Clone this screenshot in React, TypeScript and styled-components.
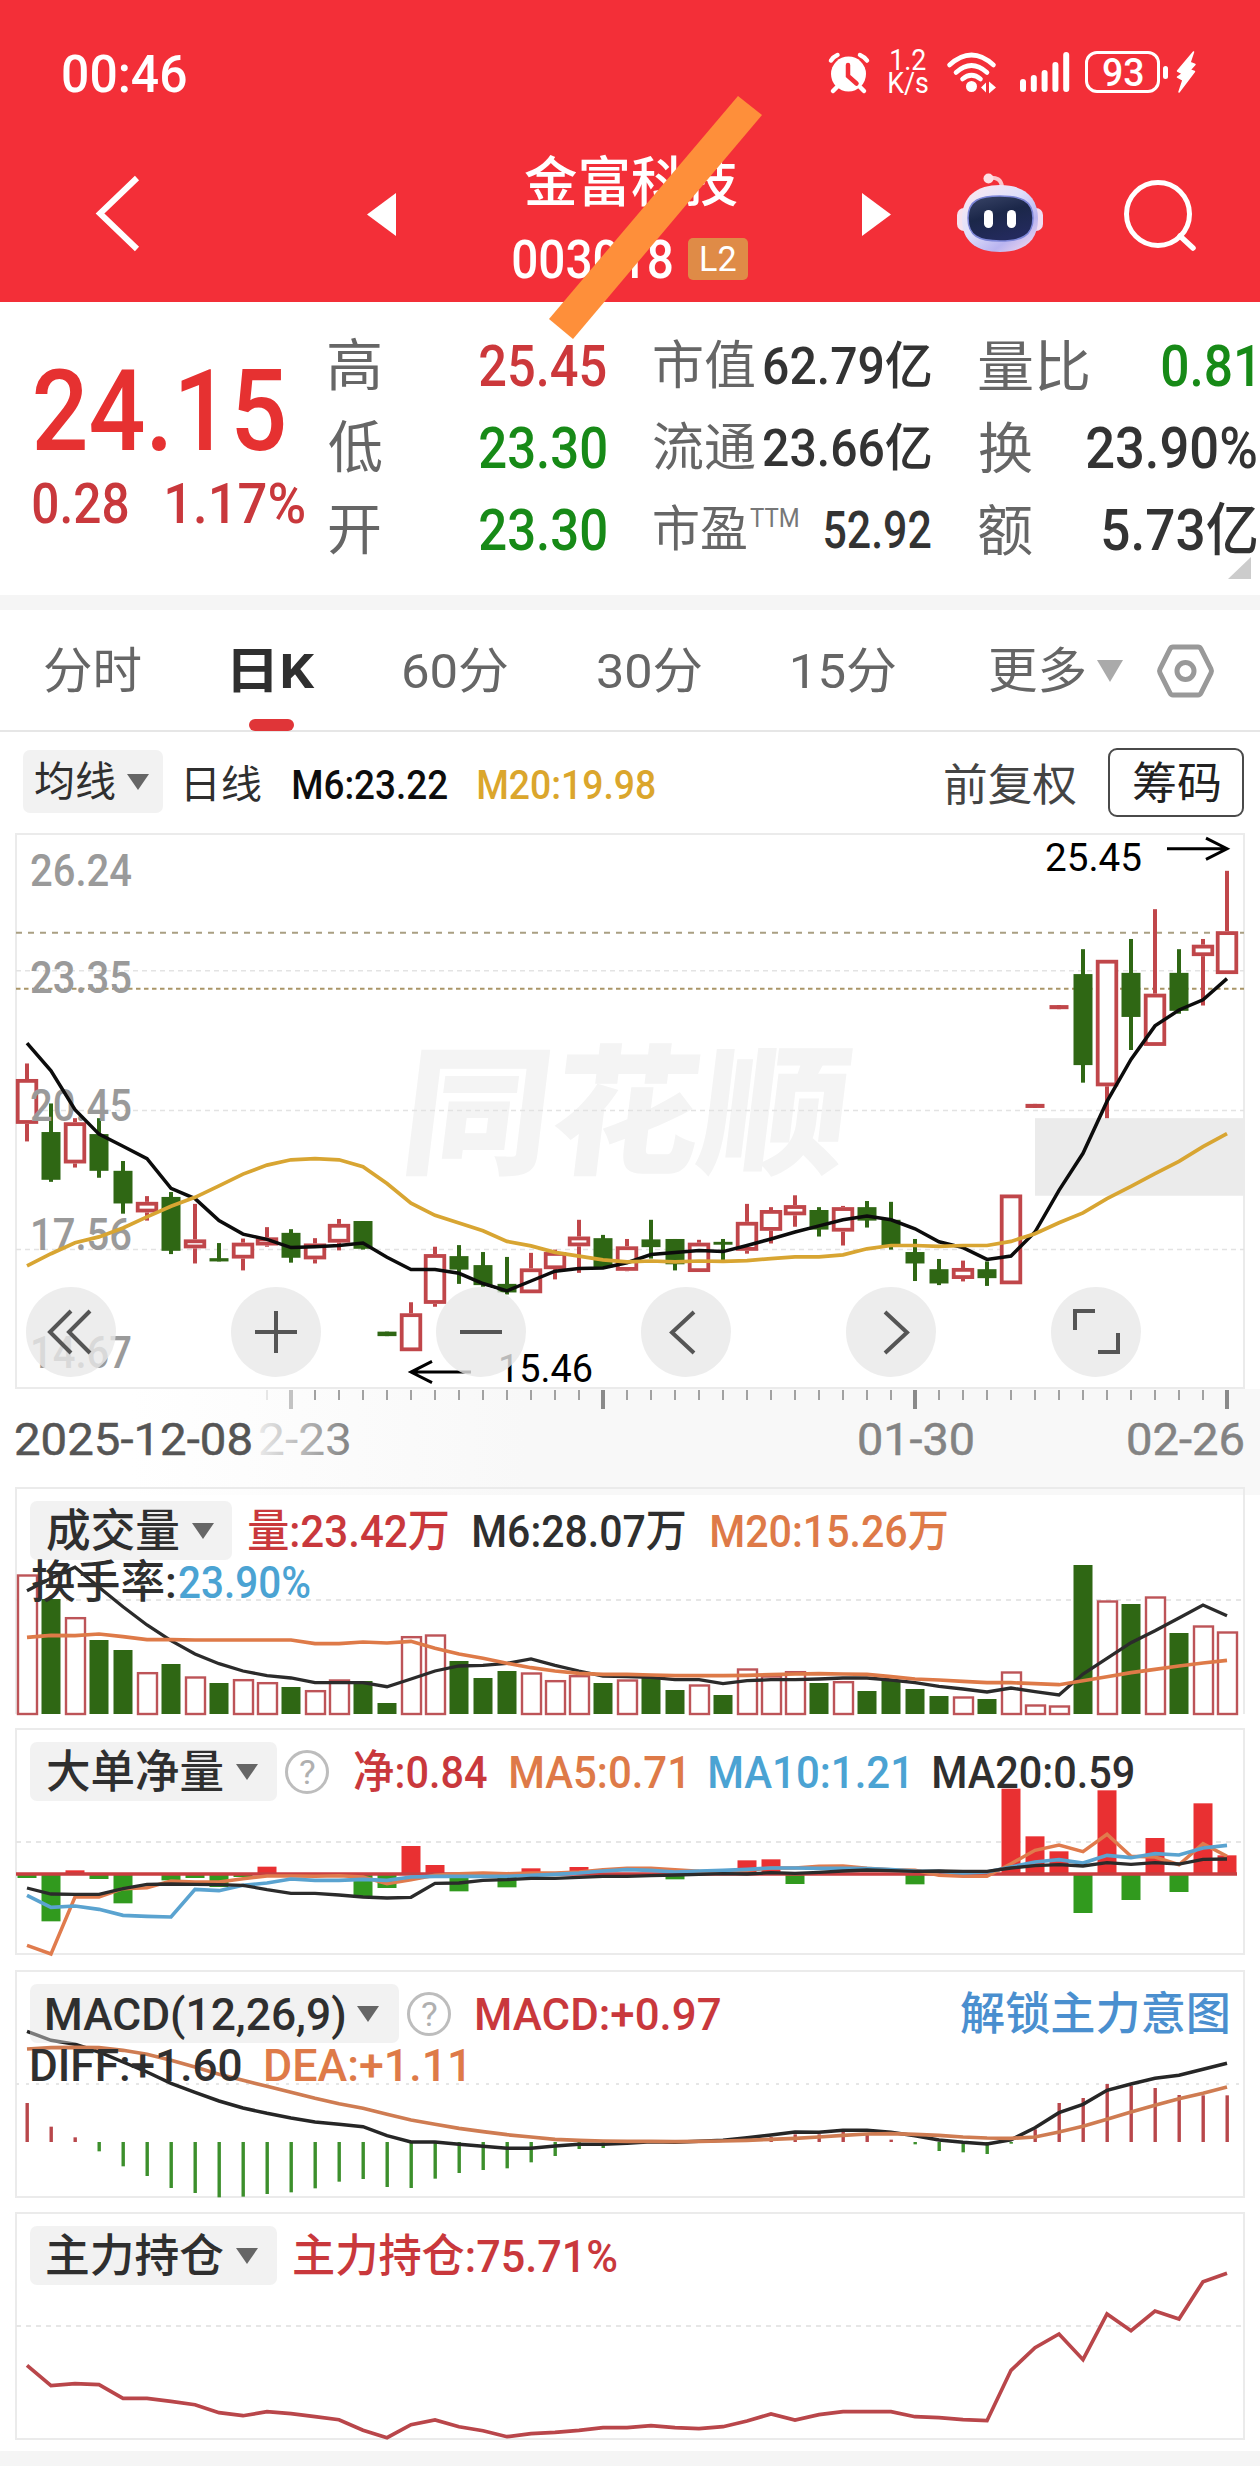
import React, { useLayoutEffect, useRef, useState } from 'react';
import styled, { createGlobalStyle } from 'styled-components';

const FONT = `Roboto, "Noto Sans CJK SC", sans-serif`;

const C = {
  header: '#f32f38',
  ink: '#2f2f2f',
  grey: '#666666',
  red: '#c9383c',
  up: '#c0464a',
  down: '#2f6714',
  green: '#178a17',
  orange: '#de7a48',
  blue: '#4ba3d3',
  gold: '#dba62c',
};

const GlobalStyle = createGlobalStyle`
  * { box-sizing: border-box; }
  html, body { margin: 0; padding: 0; background: #fff; }
  body { font-family: ${FONT}; color: ${C.ink}; width: 1260px; overflow-x: hidden; }
`;

/* ---------- condensed text: squeezes a run of glyphs to a given width ---------- */

const FitBox = styled.span<{ $w: number; $size: number; $weight: number; $color: string }>`
  display: inline-block;
  flex: none;
  width: ${p => p.$w}px;
  padding-top: 0.07em;
  font-size: ${p => p.$size}px;
  font-weight: ${p => p.$weight};
  color: ${p => p.$color};
  line-height: 1.2;
  white-space: nowrap;
`;
const FitInner = styled.span`
  display: inline-block;
  transform-origin: 0 50%;
`;

type FitProps = { children: string; w: number; size: number; weight?: number; color?: string };

function Fit({ children, w, size, weight = 400, color = C.ink }: FitProps) {
  const ref = useRef<HTMLSpanElement>(null);
  const [transform, setTransform] = useState('none');
  useLayoutEffect(() => {
    const ctx = document.createElement('canvas').getContext('2d');
    if (!ctx || !ref.current) return;
    ctx.font = `${weight} ${size}px ${FONT}`;
    const m = ctx.measureText(children);
    const left = -m.actualBoundingBoxLeft;
    const k = w / (m.actualBoundingBoxRight - left);
    setTransform(`scaleX(${k.toFixed(4)}) translateX(${(-left).toFixed(2)}px)`);
  }, [children, w, size, weight]);
  return (
    <FitBox $w={w} $size={size} $weight={weight} $color={color}>
      <FitInner ref={ref} style={{ transform }}>{children}</FitInner>
    </FitBox>
  );
}

/* ---------- header ---------- */

const Page = styled.main`
  position: relative;
  width: 1260px;
  height: 2470px;
  background: #fff;
  overflow: hidden;
`;
const Header = styled.header`
  height: 302px;
  background: ${C.header};
`;
const StatusBar = styled.div`
  height: 146px;
  padding: 0 64px 0 63px;
  display: flex;
  align-items: center;
  justify-content: space-between;
`;
const StatusIcons = styled.div`
  display: flex;
  align-items: center;
  margin-top: -2px;
`;
const NetSpeed = styled.div`
  display: flex;
  flex-direction: column;
  align-items: center;
  margin: 0 19px;
  && span { line-height: 23px; padding-top: 0; display: block; }
`;
const Glyph = styled.svg<{ $ml?: number }>`
  display: block;
  flex: none;
  overflow: visible;
  margin-left: ${p => p.$ml ?? 0}px;
`;
const Battery = styled.div`
  width: 75px;
  height: 42px;
  margin-left: 16px;
  border: 3px solid #fff;
  border-radius: 12px;
  display: flex;
  align-items: center;
  justify-content: center;
`;
const BatteryNub = styled.i`
  width: 5px;
  height: 13px;
  margin-left: 3px;
  border-radius: 3px;
  background: #fff;
`;
const Nav = styled.nav`
  height: 134px;
  padding-left: 96px;
  display: flex;
  align-items: center;
`;
const Title = styled.div`
  width: 235px;
  margin: 16px 0 0 117px;
  display: flex;
  flex-direction: column;
  align-items: center;
`;
const TitleLine = styled.div`
  width: 100%;
  height: 76px;
  display: flex;
  align-items: center;
  justify-content: center;
  gap: 16px;
`;
const Level = styled.span`
  width: 60px;
  height: 42px;
  border-radius: 5px;
  background: #df8b47;
  display: flex;
  align-items: center;
  justify-content: center;
`;
const Strike = styled.svg`
  position: absolute;
  left: 0;
  top: 0;
  pointer-events: none;
`;

function AlarmIcon() {
  return (
    <Glyph width="42" height="41" viewBox="0 0 42 41">
      <circle cx="20.5" cy="22" r="17.5" fill="#fff" />
      <g stroke="#fff" strokeWidth="4.5" strokeLinecap="round" fill="none">
        <path d="M3 8.500Q5 5 9.500 3M32 3Q36.500 5 39 8.500M9 35l-4 4M32 35l4 4" />
      </g>
      <path d="M20 13v11l8.500 7.500" stroke={C.header} strokeWidth="4.500" strokeLinecap="round" fill="none" />
    </Glyph>
  );
}
function WifiIcon() {
  return (
    <Glyph width="49" height="41" viewBox="0 0 49 41">
      <g stroke="#fff" strokeWidth="4.600" strokeLinecap="round" fill="none">
        <path d="M2.500 13Q24.500 -7 46.500 13" />
        <path d="M9 20.500Q24.500 6.500 40 20.500" />
        <path d="M15.500 27Q24.500 19.500 33.500 27" />
      </g>
      <circle cx="24.500" cy="34.500" r="5.500" fill="#fff" />
      <path d="M34 35.500l5-5v10zM49 35.500l-7-6v12z" fill="#fff" />
    </Glyph>
  );
}
function SignalIcon() {
  const tops = [27, 23, 18, 10, 0];
  return (
    <Glyph $ml={24} width="49" height="40" viewBox="0 0 49 40">
      {tops.map((t, i) => <rect key={t} x={i * 10.8} y={t} width="6" height={40 - t} rx="3" fill="#fff" />)}
    </Glyph>
  );
}
function RobotIcon() {
  return (
    <Glyph $ml={66} width="86" height="80" viewBox="0 0 86 80">
      <defs>
        <linearGradient id="shell" x1="0" y1="0" x2="0.9" y2="1">
          <stop offset="0" stopColor="#ffe9ee" />
          <stop offset="0.45" stopColor="#dfe0fb" />
          <stop offset="0.75" stopColor="#b9b4f0" />
          <stop offset="1" stopColor="#f3d8ee" />
        </linearGradient>
        <linearGradient id="visor" x1="0" y1="0" x2="0.4" y2="1">
          <stop offset="0" stopColor="#3a4568" />
          <stop offset="0.5" stopColor="#1b2749" />
          <stop offset="1" stopColor="#232a5c" />
        </linearGradient>
      </defs>
      <path d="M31 5q13-2 14 9" stroke="#fbc7cd" strokeWidth="4" fill="none" />
      <circle cx="31.500" cy="5.500" r="5" fill="#fddfe3" />
      <rect x="0" y="35" width="16" height="23" rx="7" fill="#f6e2ee" />
      <rect x="70" y="35" width="16" height="23" rx="7" fill="#f0dcf2" />
      <path d="M43 12C66 12 81 23 81 46C81 68 67 79 43 79C19 79 5 68 5 46C5 23 20 12 43 12z" fill="url(#shell)" />
      <path d="M43 23C63 23 76 27 76 45C76 63 64 68 43 68C22 68 11 63 11 45C11 27 23 23 43 23z" fill="url(#visor)" stroke="#7d86d8" strokeWidth="1.500" />
      <rect x="27" y="37" width="9" height="18" rx="4.500" fill="#fff" />
      <rect x="50" y="37" width="9" height="18" rx="4.500" fill="#fff" />
    </Glyph>
  );
}

function HeaderBar() {
  return (
    <Header>
      <StatusBar>
        <Fit w={123} size={52} weight={500} color="#fff">00:46</Fit>
        <StatusIcons>
          <AlarmIcon />
          <NetSpeed>
            <Fit w={35} size={29} color="#fff">1.2</Fit>
            <Fit w={39} size={29} color="#fff">K/s</Fit>
          </NetSpeed>
          <WifiIcon />
          <SignalIcon />
          <Battery><Fit w={40} size={38} weight={500} color="#fff">93</Fit></Battery>
          <BatteryNub />
          <Glyph $ml={8} width="20" height="42" viewBox="0 0 20 42">
            <path d="M17.500 1L1.500 20l5 2.500-5 3.500 5.500 3L3 41 18.500 20.500l-4.500-1.500 5-5.500-5-2z" fill="#fff" stroke="#fff" strokeWidth="1.500" strokeLinejoin="round" />
          </Glyph>
        </StatusIcons>
      </StatusBar>
      <Nav>
        <Glyph width="44" height="75" viewBox="0 0 44 75">
          <path d="M41 2L4 37.500L41 73" fill="none" stroke="#fff" strokeWidth="6" />
        </Glyph>
        <Glyph $ml={227} width="29" height="43" viewBox="0 0 29 43"><path d="M29 1v43L0 22.500z" fill="#fff" /></Glyph>
        <Title>
          <TitleLine><Fit w={212} size={54} weight={500} color="#fff">金富科技</Fit></TitleLine>
          <TitleLine>
            <Fit w={159} size={53} weight={500} color="#fff">003018</Fit>
            <Level><Fit w={35} size={35} color="#fff">L2</Fit></Level>
          </TitleLine>
        </Title>
        <Glyph $ml={114} width="29" height="43" viewBox="0 0 29 43"><path d="M0 1v43L29 22.500z" fill="#fff" /></Glyph>
        <RobotIcon />
        <Glyph $ml={79} width="75" height="73" viewBox="0 0 75 73">
          <circle cx="36" cy="37" r="31.500" fill="none" stroke="#fff" strokeWidth="5" />
          <path d="M58 59l13 12" stroke="#fff" strokeWidth="5.500" strokeLinecap="round" />
        </Glyph>
      </Nav>
    </Header>
  );
}

/* ---------- quote ---------- */

const Quote = styled.section`
  position: relative;
  height: 293px;
  padding: 22px 0 0 33px;
  display: grid;
  grid-template-columns: 248px 277px 277px 277px;
  column-gap: 48px;
  align-content: start;
`;
const PriceBlock = styled.div`
  padding-top: 26px;
`;
const BigPrice = styled.div`
  height: 115px;
  display: flex;
  align-items: center;
  padding-left: 2px;
`;
const Change = styled.div`
  height: 76px;
  display: flex;
  align-items: center;
  gap: 39px;
`;
const QuoteCol = styled.div`
  display: flex;
  flex-direction: column;
`;
const QuoteRow = styled.div<{ $pr: number }>`
  height: 82px;
  padding-right: ${p => p.$pr}px;
  display: flex;
  align-items: center;
  justify-content: space-between;
`;
const LabelGroup = styled.span`
  display: flex;
  align-items: flex-start;
  gap: 4px;
`;
const Superscript = styled.span`
  display: flex;
  padding-top: 4px;
`;
const Corner = styled.i`
  position: absolute;
  right: 9px;
  bottom: 16px;
  border-left: 23px solid transparent;
  border-bottom: 22px solid #cccccc;
`;
const Band = styled.div`
  height: 15px;
  background: #f5f5f5;
`;

type Cell = { label: string; lw: number; ls: number; sup?: string; value: string; vw: number; vs: number; color: string; pr?: number };
const D = '#333333';
const QUOTES: Cell[][] = [
  [
    { label: '高', lw: 51, ls: 56, value: '25.45', vw: 126, vs: 57, color: '#cc383b' },
    { label: '低', lw: 53, ls: 56, value: '23.30', vw: 126, vs: 57, color: C.green },
    { label: '开', lw: 51, ls: 56, value: '23.30', vw: 126, vs: 57, color: C.green },
  ],
  [
    { label: '市值', lw: 100, ls: 52, value: '62.79亿', vw: 167, vs: 51, color: D },
    { label: '流通', lw: 101, ls: 52, value: '23.66亿', vw: 167, vs: 51, color: D },
    { label: '市盈', lw: 92, ls: 49, sup: 'TTM', value: '52.92', vw: 106, vs: 51, color: D },
  ],
  [
    { label: '量比', lw: 109, ls: 55, value: '0.81', vw: 91, vs: 57, color: C.green, pr: 3 },
    { label: '换', lw: 53, ls: 55, value: '23.90%', vw: 169, vs: 57, color: D },
    { label: '额', lw: 53, ls: 55, value: '5.73亿', vw: 153, vs: 57, color: D },
  ],
];

function QuotePanel() {
  return (
    <Quote>
      <PriceBlock>
        <BigPrice><Fit w={249} size={114} weight={500} color="#e63131">24.15</Fit></BigPrice>
        <Change>
          <Fit w={95} size={56} weight={500} color={C.red}>0.28</Fit>
          <Fit w={137} size={56} weight={500} color={C.red}>1.17%</Fit>
        </Change>
      </PriceBlock>
      {QUOTES.map((col, i) => (
        <QuoteCol key={i}>
          {col.map(c => (
            <QuoteRow key={c.label} $pr={c.pr ?? 0}>
              <LabelGroup>
                <Fit w={c.lw} size={c.ls} color={C.grey}>{c.label}</Fit>
                {c.sup && <Superscript><Fit w={48} size={25} color="#777">{c.sup}</Fit></Superscript>}
              </LabelGroup>
              <Fit w={c.vw} size={c.vs} weight={500} color={c.color}>{c.value}</Fit>
            </QuoteRow>
          ))}
        </QuoteCol>
      ))}
      <Corner />
    </Quote>
  );
}

/* ---------- period tabs ---------- */

const Tabs = styled.div`
  height: 122px;
  border-bottom: 2px solid #e6e6e6;
  padding-left: 45px;
  display: flex;
`;
const Tab = styled.div<{ $ml: number; $active?: boolean }>`
  position: relative;
  height: 120px;
  padding-top: 2px;
  margin-left: ${p => p.$ml}px;
  display: flex;
  align-items: center;
  &::after {
    content: '';
    display: ${p => (p.$active ? 'block' : 'none')};
    position: absolute;
    left: 16px;
    bottom: -1px;
    width: 45px;
    height: 12px;
    border-radius: 6px;
    background: #e03538;
  }
`;
const Caret = styled.i<{ $w: number; $h: number; $color: string; $ml: number }>`
  flex: none;
  margin-left: ${p => p.$ml}px;
  border-left: ${p => p.$w / 2}px solid transparent;
  border-right: ${p => p.$w / 2}px solid transparent;
  border-top: ${p => p.$h}px solid ${p => p.$color};
`;

const TABS = [
  { text: '分时', w: 96, ml: 0 },
  { text: '日K', w: 82, ml: 92, active: true },
  { text: '60分', w: 104, ml: 89 },
  { text: '30分', w: 104, ml: 90 },
  { text: '15分', w: 103, ml: 91 },
  { text: '更多', w: 95, ml: 94, caret: true },
];

function PeriodTabs() {
  return (
    <Tabs>
      {TABS.map(t => (
        <Tab key={t.text} $ml={t.ml} $active={t.active}>
          <Fit w={t.w} size={49} weight={t.active ? 700 : 400} color={t.active ? '#2f2f2f' : C.grey}>{t.text}</Fit>
          {t.caret && <Caret $w={27} $h={22} $color="#aaaaaa" $ml={12} />}
        </Tab>
      ))}
      <Tab $ml={34}>
        <Glyph width="57" height="54" viewBox="0 0 57 54">
          <path d="M16 3h25q2 0 3 2l10 20q1 2 0 4L44 49q-1 2-3 2H16q-2 0-3-2L3 29q-1-2 0-4L13 5q1-2 3-2z" fill="none" stroke="#999" strokeWidth="5" />
          <circle cx="28.500" cy="27" r="8.500" fill="none" stroke="#999" strokeWidth="5" />
        </Glyph>
      </Tab>
    </Tabs>
  );
}

/* ---------- moving average legend ---------- */

const Legend = styled.div`
  height: 101px;
  padding: 0 16px 0 23px;
  display: flex;
  align-items: center;
`;
const PickBox = styled.div`
  width: 140px;
  height: 63px;
  margin-top: -2px;
  padding-left: 12px;
  border-radius: 7px;
  background: #f2f2f2;
  display: flex;
  align-items: center;
`;
const LegendItem = styled.div<{ $ml: number }>`
  display: flex;
  margin: 4px 0 0 ${p => p.$ml}px;
`;
const ChipButton = styled.button`
  width: 136px;
  height: 69px;
  margin-left: 32px;
  padding: 0;
  font-family: inherit;
  background: #fff;
  border: 2px solid #4a4a4a;
  border-radius: 9px;
  display: flex;
  align-items: center;
  justify-content: center;
`;

function MaLegend() {
  return (
    <Legend>
      <PickBox>
        <Fit w={80} size={41}>均线</Fit>
        <Caret $w={22} $h={16} $color="#666" $ml={12} />
      </PickBox>
      <LegendItem $ml={23}><Fit w={75} size={39}>日线</Fit></LegendItem>
      <LegendItem $ml={32}><Fit w={154} size={41} weight={500} color="#0d0d0d">M6:23.22</Fit></LegendItem>
      <LegendItem $ml={31}><Fit w={177} size={41} weight={500} color={C.gold}>M20:19.98</Fit></LegendItem>
      <LegendItem $ml={290}><Fit w={131} size={44} color="#444">前复权</Fit></LegendItem>
      <ChipButton><Fit w={87} size={44} color="#222">筹码</Fit></ChipButton>
    </Legend>
  );
}

/* ---------- charts ---------- */

const STEP = 24;
const X0 = 27;
const px = (i: number) => X0 + STEP * i;
const line = (vals: number[], y: (v: number) => number) =>
  vals.map((v, i) => `${px(i)},${y(v).toFixed(1)}`).join(' ');

const Plot = styled.svg`
  display: block;
  position: absolute;
  left: 0;
  top: 0;
  overflow: visible;
`;
const KArea = styled.section`
  position: relative;
  height: 654px;
`;
const Controls = styled.div`
  position: absolute;
  left: 26px;
  top: 454px;
  display: flex;
  gap: 115px;
`;
const RoundButton = styled.button`
  width: 90px;
  height: 90px;
  padding: 0;
  border: 0;
  border-radius: 50%;
  background: rgba(232, 232, 232, 0.8);
  display: flex;
  align-items: center;
  justify-content: center;
`;

type K = ['r' | 'g', number, number, number, number];
const CANDLES: K[] = [
  ['r', 572, 610, 720, 763], ['g', 670, 740, 857, 862], ['r', 706, 716, 817, 827], ['g', 706, 745, 835, 852],
  ['g', 811, 835, 915, 940], ['r', 897, 911, 937, 957], ['g', 887, 899, 1031, 1039], ['r', 916, 1003, 1025, 1062],
  ['g', 1012, 1049, 1057, 1057], ['r', 1001, 1011, 1050, 1079], ['r', 973, 998, 1018, 1021], ['g', 978, 987, 1048, 1060],
  ['r', 1000, 1013, 1052, 1062], ['r', 953, 965, 1011, 1030], ['g', 958, 958, 1026, 1028], ['g', 1229, 1229, 1240, 1240],
  ['r', 1157, 1184, 1277, 1277], ['r', 1021, 1039, 1161, 1168], ['g', 1017, 1044, 1077, 1112], ['g', 1034, 1066, 1115, 1119],
  ['g', 1046, 1112, 1133, 1138], ['r', 1036, 1074, 1135, 1135], ['r', 1028, 1034, 1076, 1101], ['r', 955, 996, 1020, 1085],
  ['g', 992, 1000, 1072, 1074], ['r', 1002, 1020, 1080, 1081], ['g', 955, 1003, 1022, 1050], ['g', 1002, 1002, 1064, 1079],
  ['r', 1004, 1011, 1083, 1083], ['g', 1002, 1009, 1016, 1054], ['r', 916, 960, 1031, 1038], ['r', 924, 931, 982, 1013],
  ['r', 895, 919, 944, 972], ['g', 924, 931, 979, 996], ['r', 921, 924, 984, 1018], ['g', 909, 924, 957, 974],
  ['g', 911, 955, 1018, 1028], ['g', 1002, 1034, 1062, 1105], ['g', 1051, 1076, 1111, 1115], ['r', 1055, 1073, 1100, 1106],
  ['g', 1057, 1076, 1098, 1117], ['r', 893, 893, 1113, 1113], ['r', 671, 671, 681, 681], ['r', 429, 429, 439, 439],
  ['g', 292, 353, 576, 619], ['r', 318, 318, 628, 706], ['g', 267, 350, 458, 539], ['r', 194, 401, 529, 529],
  ['g', 292, 350, 443, 450], ['r', 267, 281, 309, 430], ['r', 100, 248, 353, 353],
];
const K_MA6 = [522, 590, 685, 745, 775, 805, 878, 903, 957, 990, 1003, 1023, 1021, 1018, 1012, 1047, 1077, 1077, 1086, 1111, 1129, 1105, 1081, 1074, 1073, 1060, 1040, 1035, 1030, 1033, 1018, 1002, 985, 970, 955, 946, 955, 977, 1009, 1023, 1052, 1044, 985, 883, 792, 665, 562, 480, 441, 416, 364];
const K_MA20 = [1068, 1038, 1011, 997, 975, 948, 922, 900, 872, 843, 821, 808, 805, 808, 825, 866, 914, 944, 963, 982, 1008, 1019, 1035, 1044, 1053, 1058, 1056, 1058, 1056, 1057, 1055, 1050, 1046, 1046, 1041, 1026, 1018, 1018, 1020, 1018, 1018, 1008, 989, 962, 938, 903, 873, 842, 812, 776, 744];

/* candle data is stored in plot units; 2.45 units make one pixel */
const ky = (v: number) => v / 2.45 - 3;

function Candle({ k, i }: { k: K; i: number }) {
  const [t, hi, top, bot, lo] = k;
  const x = px(i);
  const color = t === 'r' ? C.up : C.down;
  const a = ky(top), b = ky(bot);
  if (t === 'g' || b - a < 6) {
    return (
      <g fill={color}>
        <rect x={x - 2} y={ky(hi)} width={4} height={ky(lo) - ky(hi)} />
        <rect x={x - 9.5} y={a} width={19} height={b - a} />
      </g>
    );
  }
  return (
    <g>
      <rect x={x - 2} y={ky(hi)} width={4} height={a - ky(hi)} fill={color} />
      <rect x={x - 2} y={b} width={4} height={Math.max(0, ky(lo) - b)} fill={color} />
      <rect x={x - 9.3} y={a + 1.9} width={18.6} height={b - a - 3.8} fill="#fff" stroke={color} strokeWidth={3.8} />
    </g>
  );
}

const PRICE_LABELS: [string, number][] = [['26.24', 137], ['23.35', 399], ['20.45', 714], ['17.56', 1029], ['14.67', 1318]];

function KChart() {
  return (
    <KArea>
      <Plot width="1260" height="654" fontFamily={FONT}>
        <defs>
          <linearGradient id="axisFade" x1="0" x2="1">
            <stop offset="0" stopColor="#fff" />
            <stop offset="0.35" stopColor="#f8f8f8" />
            <stop offset="1" stopColor="#f8f8f8" />
          </linearGradient>
          <linearGradient id="dateFade" gradientUnits="userSpaceOnUse" x1="240" x2="345" y1="0" y2="0">
            <stop offset="0" stopColor="#fff" />
            <stop offset="1" stopColor="#888" />
          </linearGradient>
        </defs>
        <rect x="130" y="556" width="1130" height="106" fill="url(#axisFade)" />
        <rect x="16" y="1" width="1228" height="554" fill="#fff" stroke="#ebebeb" strokeWidth="2" />
        <text x="402" y="330" fontSize="140" fontWeight="900" fill="#f4f4f4" textLength="446" lengthAdjust="spacingAndGlyphs" transform="translate(36 0) skewX(-7)">同花顺</text>
        <rect x="1035" y={ky(706)} width="209" height={ky(896) - ky(706)} fill="#ebebeb" />
        {[345, 687, 1028].map(v => (
          <line key={v} x1="16" x2="1244" y1={ky(v)} y2={ky(v)} stroke="#e3e3e3" strokeWidth="1.500" strokeDasharray="5 4" />
        ))}
        <line x1="16" x2="1244" y1={ky(252)} y2={ky(252)} stroke="#a99f82" strokeWidth="2" strokeDasharray="6 6" />
        <line x1="16" x2="1244" y1={ky(389)} y2={ky(389)} stroke="#a99567" strokeWidth="2" strokeDasharray="4.500 3.500" />
        {CANDLES.map((k, i) => <Candle key={i} k={k} i={i} />)}
        <g fontSize="44" fontWeight="500" fill="#9a9a9a">
          {PRICE_LABELS.map(([t, v]) => (
            <text key={t} x="30" y={ky(v)} textLength="102" lengthAdjust="spacingAndGlyphs">{t}</text>
          ))}
        </g>
        <polyline points={line(K_MA6, ky)} fill="none" stroke="#0c0c0c" strokeWidth="3.500" />
        <polyline points={line(K_MA20, ky)} fill="none" stroke="#d8a532" strokeWidth="3.700" />
        <g fontSize="38" fill="#000">
          <text x="1045" y={ky(100)} textLength="97" lengthAdjust="spacingAndGlyphs">25.45</text>
          <text x="498" y={ky(1352)} textLength="95" lengthAdjust="spacingAndGlyphs">15.46</text>
        </g>
        <g stroke="#000" strokeWidth="3" fill="none">
          <path d={`M1167 ${ky(46)}H1226M1206 ${ky(20)}L1227 ${ky(46)}L1206 ${ky(72)}`} />
          <path d={`M471 ${ky(1328)}H412M432 ${ky(1302)}L411 ${ky(1328)}L432 ${ky(1354)}`} />
        </g>
        {CANDLES.map((_, i) => {
          if (i < 10) return null;
          const major = (i - 11) % 13 === 0;
          return (
            <rect key={i} x={px(i) - (major ? 2 : 1)} y="557" width={major ? 4 : 2} height={major ? 19 : 10}
              fill={major ? '#8a8a8a' : '#a2a2a2'} opacity={i === 10 ? 0.25 : i === 11 ? 0.5 : 1} />
          );
        })}
        <g fontSize="44" fontWeight="400" strokeWidth="0.500">
          <text x="14" y="622" fill="#555" stroke="#555" textLength="239" lengthAdjust="spacingAndGlyphs">2025-12-08</text>
          <text x="258" y="622" fill="url(#dateFade)" textLength="94" lengthAdjust="spacingAndGlyphs">2-23</text>
          <text x="857" y="622" fill="#838383" stroke="#838383" textLength="118" lengthAdjust="spacingAndGlyphs">01-30</text>
          <text x="1126" y="622" fill="#838383" stroke="#838383" textLength="119" lengthAdjust="spacingAndGlyphs">02-26</text>
        </g>
      </Plot>
      <Controls>
        {[
          'M23 -21L2 0L23 21M42 -21L21 0L42 21',
          'M2 0H44M23 -21V21',
          'M2 0H44',
          'M31 -20L9 0.500L31 21',
          'M17 -20L39 0.500L17 21',
          'M2 -2V-21H22M25 20H45V1',
        ].map(d => (
          <RoundButton key={d}>
            <svg width="46" height="46" viewBox="0 -23 46 46" overflow="visible">
              <path d={d} fill="none" stroke="#555" strokeWidth="4" />
            </svg>
          </RoundButton>
        ))}
      </Controls>
    </KArea>
  );
}

/* ---------- indicator panels ---------- */

const Panel = styled.section<{ $h: number; $mb: number; $open?: boolean }>`
  position: relative;
  height: ${p => p.$h}px;
  margin: 0 15px ${p => p.$mb}px 15px;
  border: 2px solid #ebebeb;
  border-bottom-width: ${p => (p.$open ? 0 : 2)}px;
`;
const PanelPlot = styled(Plot)`
  left: -17px;
  top: -2px;
`;
const PanelHead = styled.div`
  position: relative;
  height: 59px;
  margin: 12px 15px 0 13px;
  display: flex;
  align-items: center;
`;
const PanelSub = styled.div`
  position: relative;
  height: 42px;
  margin-left: 15px;
  display: flex;
  align-items: center;
`;
const Picker = styled.div<{ $w: number }>`
  flex: none;
  width: ${p => p.$w}px;
  height: 59px;
  padding-left: 17px;
  border-radius: 7px;
  background: rgba(226, 226, 226, 0.45);
  display: flex;
  align-items: center;
`;
const Help = styled.span`
  flex: none;
  width: 44px;
  height: 44px;
  margin-left: 8px;
  border: 3px solid #bdbdbd;
  border-radius: 50%;
  display: flex;
  align-items: center;
  justify-content: center;
`;
const Slot = styled.span<{ $ml: number | 'auto' }>`
  display: flex;
  margin-left: ${p => (p.$ml === 'auto' ? 'auto' : `${p.$ml}px`)};
`;

type Item = { t: string; w: number; ml: number | 'auto'; color: string };
type PanelInfo = { name: string; nameW: number; boxW: number; help?: boolean; items: Item[]; sub?: Item[] };

function PanelText({ info }: { info: PanelInfo }) {
  return (
    <>
      <PanelHead>
        <Picker $w={info.boxW}>
          <Fit w={info.nameW} size={45} weight={500}>{info.name}</Fit>
          <Caret $w={22} $h={16} $color="#666" $ml={13} />
        </Picker>
        {info.help && <Help><Fit w={15} size={33} color="#b0b0b0">?</Fit></Help>}
        {info.items.map(it => (
          <Slot key={it.t} $ml={it.ml}><Fit w={it.w} size={45} weight={500} color={it.color}>{it.t}</Fit></Slot>
        ))}
      </PanelHead>
      {info.sub && (
        <PanelSub>
          {info.sub.map(it => (
            <Slot key={it.t} $ml={it.ml}><Fit w={it.w} size={45} weight={500} color={it.color}>{it.t}</Fit></Slot>
          ))}
        </PanelSub>
      )}
    </>
  );
}

function Grid({ y, dash = '5 5' }: { y: number; dash?: string }) {
  return <line x1="16" x2="1244" y1={y} y2={y} stroke="#e6e6e6" strokeWidth="2" strokeDasharray={dash} />;
}

const VOL = [285, 357, 413, 480, 510, 578, 552, 591, 609, 599, 608, 621, 632, 600, 603, 669, 470, 465, 543, 594, 573, 579, 602, 587, 609, 600, 594, 630, 615, 645, 567, 588, 575, 609, 605, 633, 600, 627, 648, 651, 657, 576, 675, 678, 255, 363, 372, 351, 459, 438, 456];
const VOL_MA6 = [332, 295, 262, 322, 380, 435, 482, 522, 551, 573, 587, 594, 608, 608, 608, 620, 597, 573, 558, 556, 550, 537, 556, 573, 588, 590, 592, 599, 599, 611, 602, 599, 599, 597, 594, 594, 600, 608, 619, 627, 636, 624, 635, 645, 582, 535, 488, 452, 414, 375, 407];
const VOL_MA20 = [472, 466, 467, 462, 470, 479, 479, 480, 480, 480, 480, 480, 491, 491, 486, 489, 484, 505, 522, 535, 550, 563, 573, 580, 583, 583, 585, 587, 587, 587, 586, 584, 582, 581, 582, 583, 590, 597, 600, 604, 608, 608, 611, 614, 602, 590, 578, 568, 558, 549, 541];

function VolumePanel() {
  const y = (v: number) => v / 3 - 7;
  const base = y(702);
  return (
    <Panel $h={227} $mb={14} $open>
      <PanelPlot width="1260" height="228">
        <Grid y={y(360)} />
        {VOL.map((v, i) =>
          CANDLES[i][0] === 'g' ? (
            <rect key={i} x={px(i) - 9.5} y={y(v)} width="19" height={base - y(v)} fill={C.down} />
          ) : (
            <rect key={i} x={px(i) - 9} y={y(v) + 0.5} width="19" height={base - y(v) - 0.5} fill="#fff" stroke="#bd5458" strokeWidth="2.400" />
          ),
        )}
        <polyline points={line(VOL_MA6, y)} fill="none" stroke="#2b2b2b" strokeWidth="3.300" />
        <polyline points={line(VOL_MA20, y)} fill="none" stroke={C.orange} strokeWidth="3.700" />
      </PanelPlot>
      <PanelText
        info={{
          name: '成交量', nameW: 132, boxW: 202,
          items: [
            { t: '量:23.42万', w: 199, ml: 17, color: C.red },
            { t: 'M6:28.07万', w: 211, ml: 26, color: C.ink },
            { t: 'M20:15.26万', w: 235, ml: 27, color: C.orange },
          ],
          sub: [
            { t: '换手率:', w: 143, ml: 0, color: C.ink },
            { t: '23.90%', w: 131, ml: 4, color: C.blue },
          ],
        }}
      />
    </Panel>
  );
}

const NET: Record<number, number> = {
  0: 1193, 1: 1323, 2: 1170, 3: 1196, 4: 1269, 6: 1200, 7: 1193, 8: 1220, 9: 1190, 10: 1159, 14: 1247, 15: 1223, 16: 1097, 17: 1154,
  18: 1233, 20: 1221, 21: 1164, 23: 1160, 27: 1197, 30: 1140, 31: 1137, 32: 1211, 37: 1212, 41: 925, 42: 1068, 43: 1113, 44: 1298,
  45: 930, 46: 1259, 47: 1073, 48: 1235, 49: 969, 50: 1125,
};
const NET_MA5 = [1395, 1421, 1250, 1250, 1225, 1222, 1202, 1205, 1205, 1195, 1187, 1187, 1188, 1186, 1190, 1210, 1198, 1185, 1180, 1178, 1180, 1178, 1178, 1175, 1168, 1164, 1164, 1168, 1173, 1175, 1170, 1163, 1163, 1158, 1157, 1164, 1168, 1170, 1185, 1188, 1188, 1150, 1110, 1094, 1114, 1062, 1128, 1130, 1153, 1090, 1128];
const NET_MA10 = [1245, 1281, 1277, 1287, 1305, 1308, 1310, 1227, 1231, 1215, 1208, 1196, 1200, 1200, 1197, 1200, 1190, 1188, 1188, 1188, 1188, 1185, 1182, 1178, 1172, 1168, 1170, 1175, 1172, 1170, 1167, 1163, 1163, 1164, 1164, 1165, 1168, 1172, 1173, 1178, 1175, 1160, 1145, 1138, 1148, 1125, 1132, 1120, 1124, 1103, 1095];
const NET_MA20 = [1223, 1241, 1242, 1242, 1225, 1212, 1211, 1212, 1213, 1215, 1228, 1239, 1239, 1244, 1250, 1253, 1251, 1209, 1208, 1200, 1198, 1194, 1194, 1191, 1188, 1188, 1186, 1184, 1182, 1180, 1181, 1177, 1179, 1176, 1172, 1169, 1171, 1173, 1172, 1173, 1173, 1163, 1156, 1153, 1157, 1147, 1152, 1147, 1151, 1137, 1136];

function NetPanel() {
  const y = (v: number) => (v - 746) / 3 + 1;
  return (
    <Panel $h={227} $mb={15}>
      <PanelPlot width="1260" height="228">
        <Grid y={y(1085)} />
        {Object.entries(NET).map(([k, v]) => {
          const up = v < 1181;
          return (
            <rect key={k} x={px(+k) - 9.5} y={up ? y(v) : y(1181)} width="19" height={Math.abs(v - 1181) / 3} fill={up ? '#e93032' : '#319a1e'} />
          );
        })}
        <line x1="16" x2="1237" y1={y(1181)} y2={y(1181)} stroke="#c93e40" strokeWidth="3.600" />
        <polyline points={line(NET_MA5, y)} fill="none" stroke="#e07b4d" strokeWidth="3.500" />
        <polyline points={line(NET_MA10, y)} fill="none" stroke="#5aa3d0" strokeWidth="3.700" />
        <polyline points={line(NET_MA20, y)} fill="none" stroke="#2b2b2b" strokeWidth="3.300" />
      </PanelPlot>
      <PanelText
        info={{
          name: '大单净量', nameW: 176, boxW: 247, help: true,
          items: [
            { t: '净:0.84', w: 133, ml: 25, color: C.red },
            { t: 'MA5:0.71', w: 172, ml: 24, color: C.orange },
            { t: 'MA10:1.21', w: 196, ml: 27, color: C.blue },
            { t: 'MA20:0.59', w: 199, ml: 28, color: C.ink },
          ],
        }}
      />
    </Panel>
  );
}

const MACD: Record<number, number> = {
  0: 428, 1: 499, 2: 531, 3: 573, 4: 618, 5: 647, 6: 683, 7: 698, 8: 711, 9: 709, 10: 701, 11: 696, 12: 684, 13: 664, 14: 656, 15: 680,
  16: 683, 17: 655, 18: 638, 19: 629, 20: 624, 21: 606, 22: 587, 23: 566, 24: 563, 31: 530, 32: 522, 33: 522, 34: 515, 35: 523, 36: 538,
  37: 552, 38: 572, 39: 576, 40: 581, 41: 550, 42: 507, 43: 428, 44: 413, 45: 371, 46: 376, 47: 383, 48: 404, 49: 405, 50: 405,
};
const DIFF = [213, 240, 252, 275, 305, 335, 369, 396, 422, 443, 459, 473, 485, 492, 499, 526, 545, 545, 552, 558, 564, 564, 557, 552, 552, 549, 544, 546, 543, 540, 532, 524, 515, 516, 510, 510, 516, 526, 539, 546, 551, 538, 502, 457, 432, 390, 371, 354, 345, 327, 309];
const DEA = [266, 262, 261, 262, 270, 282, 300, 320, 342, 360, 378, 396, 414, 430, 444, 462, 479, 492, 504, 514, 523, 530, 537, 540, 542, 543, 543, 544, 543, 542, 540, 537, 534, 530, 525, 521, 520, 522, 525, 530, 533, 534, 530, 515, 498, 477, 455, 435, 415, 399, 380];

function MacdPanel() {
  const y = (v: number) => (v - 32) / 3 + 1;
  return (
    <Panel $h={228} $mb={14}>
      <PanelPlot width="1260" height="228">
        <Grid y={y(371)} dash="3 7" />
        {Object.entries(MACD).map(([k, v]) => (
          <rect key={k} x={px(+k) - 1.5} y={Math.min(y(v), y(545))} width="3.400" height={Math.abs(v - 545) / 3} fill={v < 545 ? '#b8474b' : '#3c8f2c'} />
        ))}
        <polyline points={line(DIFF, y)} fill="none" stroke="#262626" strokeWidth="3.500" />
        <polyline points={line(DEA, y)} fill="none" stroke="#cf7c52" strokeWidth="3.700" />
      </PanelPlot>
      <PanelText
        info={{
          name: 'MACD(12,26,9)', nameW: 297, boxW: 369, help: true,
          items: [
            { t: 'MACD:+0.97', w: 243, ml: 26, color: C.red },
            { t: '解锁主力意图', w: 267, ml: 'auto', color: '#4a8fcf' },
          ],
          sub: [
            { t: 'DIFF:+1.60', w: 209, ml: 0, color: C.ink },
            { t: 'DEA:+1.11', w: 198, ml: 25, color: C.orange },
          ],
        }}
      />
    </Panel>
  );
}

const HOLD = [1216, 1277, 1271, 1274, 1315, 1315, 1324, 1334, 1358, 1367, 1355, 1361, 1370, 1379, 1411, 1433, 1394, 1380, 1400, 1412, 1430, 1421, 1417, 1411, 1403, 1403, 1397, 1403, 1406, 1400, 1383, 1362, 1380, 1364, 1355, 1355, 1355, 1370, 1373, 1379, 1382, 1231, 1163, 1122, 1199, 1062, 1112, 1053, 1077, 965, 940];

function HoldPanel() {
  const y = (v: number) => (v - 759) / 3 + 1;
  return (
    <Panel $h={228} $mb={11}>
      <PanelPlot width="1260" height="228">
        <Grid y={y(1098)} />
        <polyline points={line(HOLD, y)} fill="none" stroke="#b9464a" strokeWidth="3.700" />
      </PanelPlot>
      <PanelText
        info={{
          name: '主力持仓', nameW: 176, boxW: 247,
          items: [{ t: '主力持仓:75.71%', w: 323, ml: 17, color: C.red }],
        }}
      />
    </Panel>
  );
}

export default function App() {
  return (
    <Page>
      <GlobalStyle />
      <HeaderBar />
      <QuotePanel />
      <Band />
      <PeriodTabs />
      <MaLegend />
      <KChart />
      <VolumePanel />
      <NetPanel />
      <MacdPanel />
      <HoldPanel />
      <Band />
      <Strike width="1260" height="360">
        <path d="M738 96L762 115L573 339L549 319z" fill="#fe8f3a" />
      </Strike>
    </Page>
  );
}
